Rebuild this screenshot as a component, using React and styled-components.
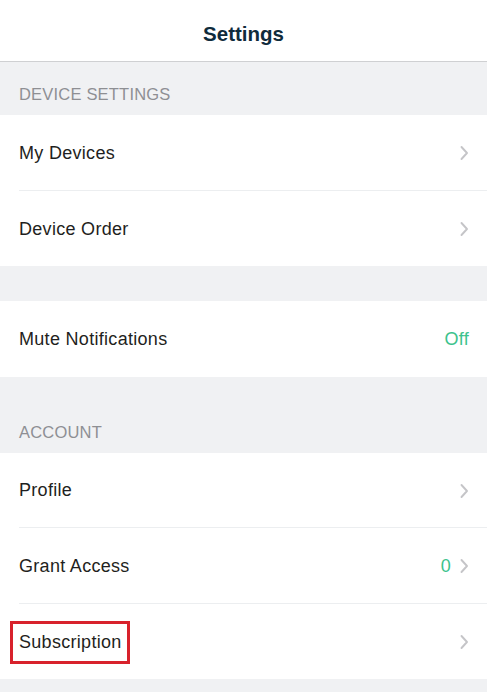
import styled, { createGlobalStyle } from 'styled-components';

const GlobalStyle = createGlobalStyle`
  html, body {
    margin: 0;
    padding: 0;
    background: #f0f1f3;
  }
  body {
    font-family: "Liberation Sans", Arial, sans-serif;
    -webkit-font-smoothing: antialiased;
  }
`;

const sections = [
  {
    title: 'DEVICE SETTINGS',
    rows: [
      { label: 'My Devices', chevron: true },
      { label: 'Device Order', chevron: true },
    ],
  },
  {
    rows: [{ label: 'Mute Notifications', value: 'Off' }],
  },
  {
    title: 'ACCOUNT',
    rows: [
      { label: 'Profile', chevron: true },
      { label: 'Grant Access', value: '0', chevron: true },
      { label: 'Subscription', chevron: true, highlighted: true },
    ],
  },
];

const Chevron = () => (
  <svg width="10" height="16" viewBox="0 0 10 16" fill="none">
    <path d="M2.5 2l5.5 6-5.5 6" stroke="#c5c5c8" strokeWidth="1.9" strokeLinecap="round" strokeLinejoin="round" />
  </svg>
);

const App = () => (
  <>
    <GlobalStyle />
    <Page>
      <Header>
        <Title>Settings</Title>
      </Header>
      {sections.map((section, i) => (
        <Section key={i}>
          <SectionHeader $tall={!!section.title} $first={i === 0}>
            {section.title && <SectionTitle>{section.title}</SectionTitle>}
          </SectionHeader>
          <Group>
            {section.rows.map((row) => (
              <Row key={row.label}>
                <Label $highlighted={row.highlighted}>{row.label}</Label>
                <Accessory>
                  {row.value && <Value>{row.value}</Value>}
                  {row.chevron && <Chevron />}
                </Accessory>
              </Row>
            ))}
          </Group>
        </Section>
      ))}
    </Page>
  </>
);

// Styled Components
const Page = styled.div`
  display: flex;
  flex-direction: column;
  min-height: 692px;
  background: #f0f1f3;
`;

const Header = styled.div`
  height: 61px;
  display: flex;
  align-items: center;
  justify-content: center;
  background: #fff;
  border-bottom: 1px solid #cfd0d2;
`;

const Title = styled.h1`
  margin: 0;
  padding-top: 6px;
  font-size: 20.5px;
  font-weight: 700;
  color: #0f2b3c;
`;

const Section = styled.div`
  display: flex;
  flex-direction: column;
`;

const SectionHeader = styled.div`
  height: ${props => (props.$tall ? (props.$first ? '53px' : '76px') : '35px')};
  display: flex;
  align-items: flex-end;
  padding: 0 19px 11px;
  box-sizing: border-box;
`;

const SectionTitle = styled.div`
  font-size: 16.5px;
  color: #8e8f93;
  letter-spacing: 0.2px;
`;

const Group = styled.div`
  background: #fff;
  padding-left: 19px;
`;

const Row = styled.div`
  height: 75.5px;
  display: flex;
  align-items: center;
  justify-content: space-between;
  padding: 2px 18px 0 0;
  box-sizing: border-box;
  border-bottom: 1px solid #eceef0;

  &:last-child {
    border-bottom: none;
  }
`;

const Label = styled.span`
  font-size: 18px;
  letter-spacing: 0.3px;
  color: #1f1f21;
  ${props => props.$highlighted && `
    margin: 0 0 0 -9px;
    padding: 8px 5px 8px 6px;
    border: 3px solid #d8222c;
  `}
`;

const Accessory = styled.div`
  display: flex;
  align-items: center;
  gap: 8px;
`;

const Value = styled.span`
  font-size: 18px;
  letter-spacing: 0.3px;
  color: #3cc28c;
`;

export default App;
